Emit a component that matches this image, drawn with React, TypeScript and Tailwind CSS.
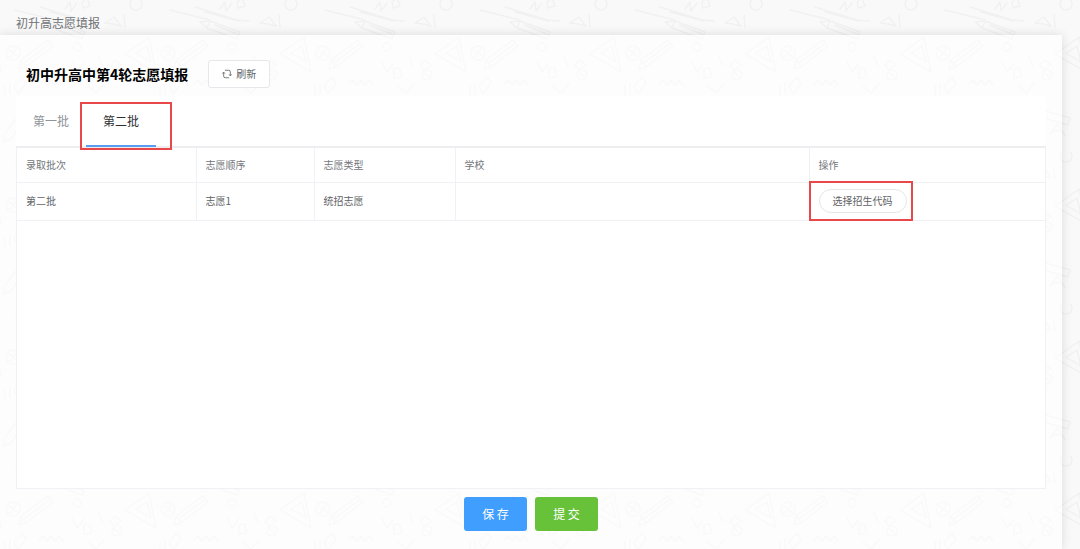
import React, { useState } from 'react';

const tabs = ['第一批', '第二批'];

const columns = [
  { label: '录取批次', width: 'w-[179px]' },
  { label: '志愿顺序', width: 'w-[118px]' },
  { label: '志愿类型', width: 'w-[141px]' },
  { label: '学校', width: '' },
  { label: '操作', width: 'w-[236px]' },
];

const rows = [{ batch: '第二批', order: '志愿1', type: '统招志愿', school: '' }];

// Faint school doodles, repeated over the whole page
const DoodleBackground: React.FC = () => (
  <svg className="absolute inset-0 h-full w-full pointer-events-none" aria-hidden="true">
    <defs>
      <pattern id="doodles" width="155" height="152" patternUnits="userSpaceOnUse">
        <g fill="none" stroke="#f1f1f1" strokeWidth="1.4" strokeLinecap="round" strokeLinejoin="round">
          {/* pencils */}
          <path d="M45 22l10-1 30 11-3 7-30-11zM55 21l-3 7M60 25l22 9" />
          <path d="M19 69l2-9 27-20 5 6-27 21zM21 60l5 7M25 62l24-18" />
          <path d="M4 135l20-27 6 4-19 27-8 3z" />
          {/* set squares */}
          <path d="M149 37l7 35-31-18zM147 46l4 16-15-9z" />
          <path d="M-6 37l7 35-31-18z" />
          <path d="M60 96l26 34-35 3zM63 106l14 20-18 2z" />
          {/* ruler */}
          <path d="M15 10l40 10M40 7l42 13 12 1M50 12l34 9" />
          <path d="M92 104l48 14-2 7-48-14z" />
          {/* compass dials and small circles */}
          <circle cx="13" cy="53" r="7" />
          <path d="M9 50l8 6M16 49l-6 8" />
          <circle cx="117" cy="75" r="5" />
          <path d="M115 73l4 4" />
          <circle cx="136" cy="4" r="6" />
          <circle cx="43" cy="110" r="7" />
          <circle cx="77" cy="47" r="4" />
          {/* letters, waves and brackets */}
          <path d="M115 60l6 5-7 5-4-5zM105 23l9-6 7 9-8-2zM124 15l1 12" />
          <path d="M39 84l4-4 4 5 4-5 4 5 4-5 4 5M72 62l5 10 7-9" />
          <path d="M65 9l5-7 1 9 6-8M82 2l5-4 3 8-7 2z" />
          <path d="M84 69q8-3 6 4q5 5-6 5zM99 57l4 9M14 86l8-9 4 6-8 11z" />
          <path d="M88 86l8 7 8-9M5 86v10M10 84v10" />
          <path d="M120 134l8-10 7 12M123 131h8M100 135q-8 2-5 8q5 4 9-2" />
        </g>
      </pattern>
    </defs>
    <rect width="100%" height="100%" fill="url(#doodles)" />
  </svg>
);

const RefreshIcon: React.FC = () => (
  <svg className="h-[10px] w-[10px]" viewBox="0 0 12 12" fill="none" stroke="currentColor" strokeWidth="1" aria-hidden="true">
    <path d="M3.500 1.500H8A2 2 0 0 1 10 3.500V8M2 4v4.500a2 2 0 0 0 2 2h4.500" />
    <path d="M8.500 6.500L10 8.300l1.500-1.800M.5 5.500L2 3.700l1.500 1.800" />
  </svg>
);

const App: React.FC = () => {
  const [activeTab, setActiveTab] = useState(1);

  return (
    <div className="relative flex min-h-screen flex-col overflow-hidden bg-[#f9f9f9] font-['Noto_Sans_CJK_SC',sans-serif] text-[#606266]">
      <DoodleBackground />

      <header className="relative flex h-[35px] items-end px-4 pb-1 text-xs leading-4 text-[#707276]">初升高志愿填报</header>

      <main className="relative mr-[18px] flex flex-1 flex-col bg-white/60 pl-4 pr-4 shadow-[0_0_10px_rgba(0,0,0,0.12)]">
        <div className="flex h-[61px] items-center gap-5 px-[10px] pt-4">
          <h1 className="text-sm leading-5 font-bold text-black">初中升高中第4轮志愿填报</h1>
          <button className="flex h-7 items-center gap-1 rounded-[3px] border border-[#e6e7ea] bg-white px-[13px] text-[10px] leading-4 cursor-pointer">
            <RefreshIcon />
            刷新
          </button>
        </div>

        {/* Tabs */}
        <div role="tablist" className="flex h-[52px] border-b-2 border-[#eeeef0] bg-white">
          {tabs.map((tab, index) => (
            <button
              key={tab}
              role="tab"
              aria-selected={activeTab === index}
              onClick={() => setActiveTab(index)}
              className={`relative h-[51px] w-[70px] text-xs leading-[50px] cursor-pointer ${
                activeTab === index
                  ? 'border-b-2 border-[#5a9cf0] text-[#303133]'
                  : 'border-b-2 border-transparent text-[#909399]'
              }`}
            >
              {tab}
              {index === 1 && (
                <span className="absolute -left-[6px] top-[6px] h-12 w-[92px] border-2 border-[#e8484a]" />
              )}
            </button>
          ))}
        </div>

        {/* Table */}
        <div className="flex-1 border border-t-0 border-[#f0f1f4] bg-white">
          <table className="w-full table-fixed border-collapse text-left text-[10px] leading-4">
            <thead>
              <tr className="h-[34px] border-b border-[#f0f1f4] text-[#73767c]">
                {columns.map((col) => (
                  <th key={col.label} className={`border-r border-[#f0f1f4] px-[9px] font-normal last:border-r-0 ${col.width}`}>
                    {col.label}
                  </th>
                ))}
              </tr>
            </thead>
            <tbody>
              {rows.map((row) => (
                <tr key={row.order} className="h-[38px] border-b border-[#f0f1f4]">
                  <td className="border-r border-[#f0f1f4] px-[9px]">{row.batch}</td>
                  <td className="border-r border-[#f0f1f4] px-[9px]">{row.order}</td>
                  <td className="border-r border-[#f0f1f4] px-[9px]">{row.type}</td>
                  <td className="border-r border-[#f0f1f4] px-[9px]">{row.school}</td>
                  <td className="px-[9px]">
                    <div className="relative w-fit">
                      <button className="flex h-6 items-center rounded-full border border-[#e3e8e3] bg-white px-[13px] cursor-pointer">
                        选择招生代码
                      </button>
                      <span className="absolute -left-[10px] -top-2 h-10 w-[104px] border-2 border-[#e8484a] pointer-events-none" />
                    </div>
                  </td>
                </tr>
              ))}
            </tbody>
          </table>
        </div>

        <div className="flex h-[60px] justify-center gap-2 pt-2 text-xs text-white">
          <button className="h-[34px] w-[63px] rounded-[3px] bg-[#409eff] cursor-pointer">保 存</button>
          <button className="h-[34px] w-[63px] rounded-[3px] bg-[#67c23a] cursor-pointer">提 交</button>
        </div>
      </main>
    </div>
  );
};

export default App;
